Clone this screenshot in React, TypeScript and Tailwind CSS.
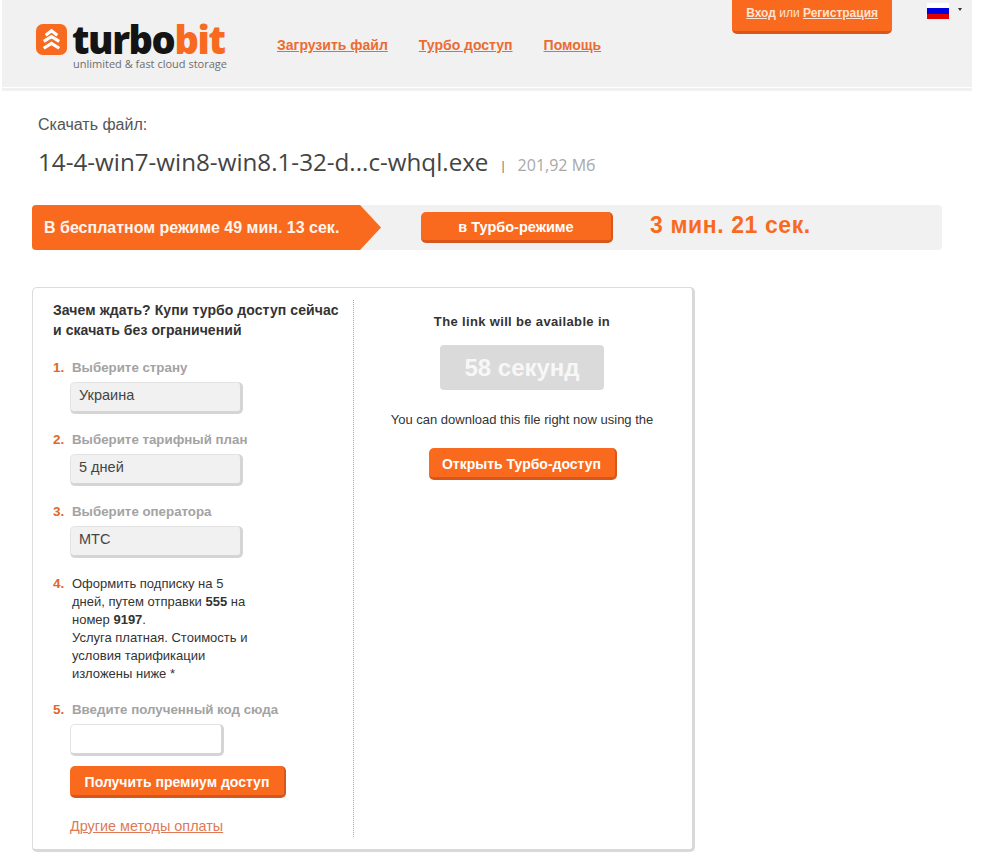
import React from "react";

function LogoIcon() {
  return (
    <svg width="31" height="31" viewBox="0 0 32 32" className="shrink-0">
      <rect x="0" y="0" width="32" height="32" rx="7" fill="#f96a21" />
      <g fill="none" stroke="#fff" strokeWidth="3.2" strokeLinejoin="miter">
        <path d="M10 11.5 L16 7 L22 11.5" />
        <path d="M8 18 L16 13 L24 18" />
        <path d="M8 25 L16 20 L24 25" />
      </g>
    </svg>
  );
}

function Flag() {
  return (
    <div className="w-[22px] h-4 flex flex-col">
      <div className="h-[5px] bg-white" />
      <div className="h-[6px] bg-[#0000e0]" />
      <div className="h-[5px] bg-[#e00000]" />
    </div>
  );
}

function Label({ n, children, mt }: { n: number; children: React.ReactNode; mt: string }) {
  return (
    <div className={`flex text-[13.3px] leading-4 font-bold ${mt}`}>
      <span className="w-[19px] text-[13.5px] text-[#e0662c]">{n}.</span>
      <span className="text-[#a3a3a3]">{children}</span>
    </div>
  );
}

function Select({ value }: { value: string }) {
  return (
    <div className="ml-[17px] mt-[6px] w-[173px] h-8 rounded-[5px] bg-[#f1f1f1] border border-[#e3e3e3] border-r-[3px] border-b-[3px] border-r-[#d5d5d5] border-b-[#d5d5d5] pl-2 pt-[4px] text-[14.5px] leading-4 text-[#444]">
      {value}
    </div>
  );
}

function Orange({ children, className }: { children: React.ReactNode; className: string }) {
  return (
    <div
      className={`flex items-center justify-center rounded-[5px] bg-[#f96a1e] border-r-2 border-b-[3px] border-r-[#d9561a] border-b-[#d9561a] pt-1 text-white font-bold ${className}`}
    >
      {children}
    </div>
  );
}

export default function App() {
  return (
    <div className="w-[983px] h-[859px] overflow-hidden bg-white font-['Liberation_Sans',Arial,sans-serif] text-[#333]">
      <header className="ml-[2px] w-[970px]">
        <div className="h-[87px] bg-[#f1f1f1] flex items-start">
          <div className="ml-[34px] mt-[23px] w-[195px]">
            <div className="flex items-center h-[32px]">
              <LogoIcon />
              <div className="ml-[5px] font-['Open_Sans',sans-serif] font-extrabold text-[38px] leading-[32px] tracking-[-1.4px] text-[#141414]">
                turbo<span className="text-[#f96a21]">bit</span>
              </div>
            </div>
            <div className="ml-[37px] mt-[2px] font-['Open_Sans',sans-serif] text-[11px] leading-[13px] text-[#6e6e6e] whitespace-nowrap">
              unlimited &amp; fast cloud storage
            </div>
          </div>
          <nav className="ml-[46px] mt-[37px] flex gap-[31px] text-[14px] leading-4 font-bold text-[#ea6c33] underline">
            <span>Загрузить файл</span>
            <span>Турбо доступ</span>
            <span>Помощь</span>
          </nav>
          <div className="ml-[131px] w-[160px] h-[34px] rounded-b-[5px] bg-[#f96a1e] border-b-[3px] border-b-[#d9561a] flex items-center justify-center text-[12px] text-[#fde3d2] pb-[6px]">
            <span>
              <b className="underline">Вход</b> или <b className="underline">Регистрация</b>
            </span>
          </div>
          <div className="ml-[35px] mt-[3px]">
            <Flag />
          </div>
          <div className="ml-[9px] mt-[8px] w-0 h-0 border-l-[2.5px] border-r-[2.5px] border-t-[3px] border-l-transparent border-r-transparent border-t-[#333]" />
        </div>
        <div className="h-px bg-white" />
        <div className="h-[3px] bg-[#f1f1f1]" />
      </header>

      <main className="pl-[32px]">
        <div className="pl-[6px] pt-[25px] text-[16px] leading-[18px] text-[#555]">Скачать файл:</div>
        <div className="pl-[6px] mt-[14px] flex items-center h-[28px]">
          <span className="font-['Open_Sans',sans-serif] text-[24.2px] leading-7 text-[#444]">
            14-4-win7-win8-win8.1-32-d...c-whql.exe
          </span>
          <span className="ml-[13px] mt-2 text-[12px] text-[#777]">|</span>
          <span className="ml-[13px] mt-[6px] font-['Open_Sans',sans-serif] text-[16px] text-[#a8a8a8]">201,92 Мб</span>
        </div>

        <div className="mt-[29px] w-[910px] h-[45px] rounded-[4px] bg-[#f1f1f1] flex items-center">
          <div className="w-[349px] h-[45px] rounded-l-[4px] bg-[#f96a1e] [clip-path:polygon(0_0,94%_0,100%_50%,94%_100%,0_100%)] pl-3 flex items-center text-[16px] font-bold text-[#fff5ee] whitespace-nowrap">
            В бесплатном режиме 49 мин. 13 сек.
          </div>
          <Orange className="ml-[40px] w-[192px] h-[31px] text-[14.5px]">в Турбо-режиме</Orange>
          <div className="ml-[37px] text-[23px] font-bold text-[#f96a1e] tracking-[0.6px] pb-[5px]">3 мин. 21 сек.</div>
        </div>

        <section className="mt-[37px] w-[663px] h-[565px] rounded-[5px] bg-white border border-[#dcdcdc] border-r-[3px] border-b-[3px] border-r-[#d9d9d9] border-b-[#d9d9d9] flex pt-[12px]">
          <div className="w-[321px] h-[537px] border-r border-dotted border-r-[#aaa] pl-[20px]">
            <div className="text-[14px] leading-5 font-bold text-[#333] tracking-[0.08px]">
              Зачем ждать? Купи турбо доступ сейчас
              <br />и скачать без ограничений
            </div>
            <Label n={1} mt="mt-[20px]">Выберите страну</Label>
            <Select value="Украина" />
            <Label n={2} mt="mt-[18px]">Выберите тарифный план</Label>
            <Select value="5 дней" />
            <Label n={3} mt="mt-[18px]">Выберите оператора</Label>
            <Select value="МТС" />
            <div className="flex mt-[17px]">
              <span className="w-[19px] text-[13.5px] leading-[18px] font-bold text-[#e0662c]">4.</span>
              <div className="text-[13px] leading-[18px] text-[#333] w-[190px]">
                Оформить подписку на 5
                <br />
                дней, путем отправки <b>555</b> на
                <br />
                номер <b>9197</b>.
                <br />
                Услуга платная. Стоимость и
                <br />
                условия тарификации
                <br />
                изложены ниже *
              </div>
            </div>
            <Label n={5} mt="mt-[19px]">Введите полученный код сюда</Label>
            <div className="ml-[17px] mt-[6px] w-[154px] h-8 rounded-[5px] bg-white border border-[#e3e3e3] border-r-[3px] border-b-[3px] border-r-[#d5d5d5] border-b-[#d5d5d5]" />
            <Orange className="ml-[17px] mt-[10px] w-[216px] h-8 text-[14px]">Получить премиум доступ</Orange>
            <div className="ml-[17px] mt-[20px] text-[14.4px] leading-4 text-[#dd7a55] underline">Другие методы оплаты</div>
          </div>
          <div className="w-[336px] flex flex-col items-center">
            <div className="mt-[14px] text-[13px] leading-4 font-bold text-[#333] tracking-[0.35px]">
              The link will be available in
            </div>
            <div className="mt-[15px] w-[164px] h-[45px] rounded-[4px] bg-[#dadada] flex items-center justify-center text-[24px] font-bold text-[#f7f7f7]">
              58 секунд
            </div>
            <div className="mt-[22px] text-[13px] leading-4 text-[#333] whitespace-nowrap">
              You can download this file right now using the
            </div>
            <Orange className="mt-[20px] ml-px w-[188px] h-8 text-[14px]">Открыть Турбо-доступ</Orange>
          </div>
        </section>
      </main>
    </div>
  );
}
